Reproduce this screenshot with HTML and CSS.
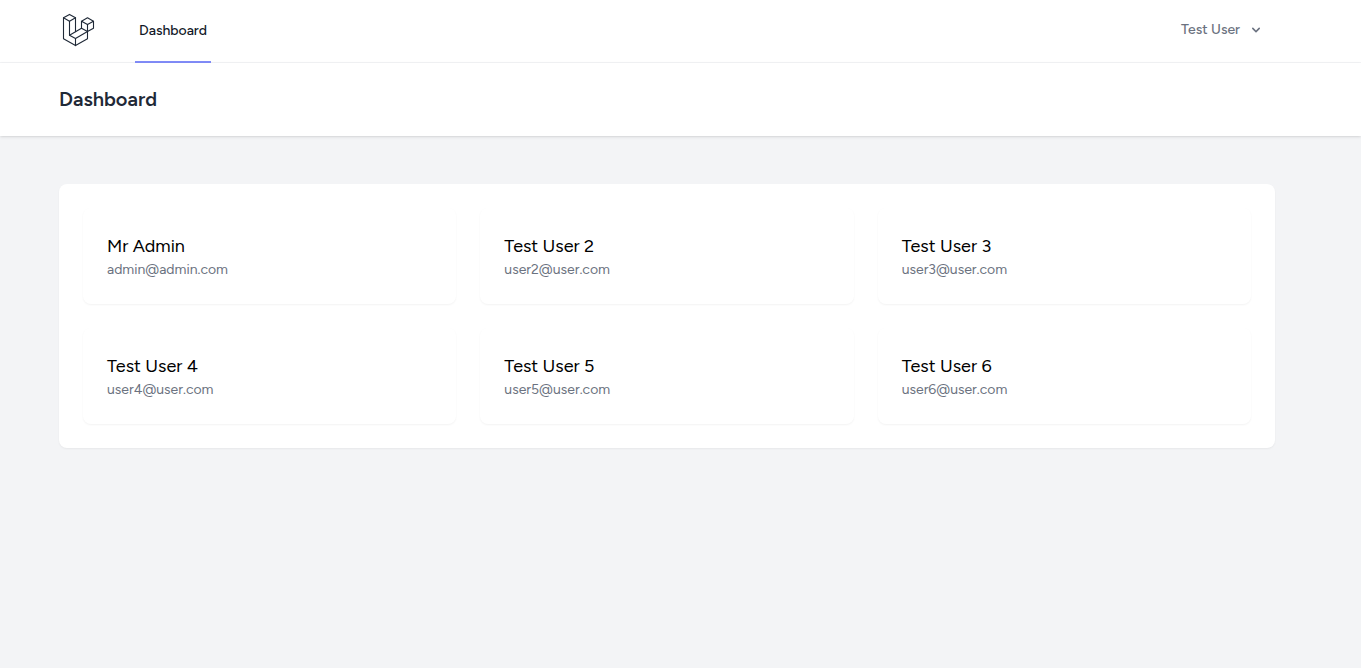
FILE: index.html
```html
<!DOCTYPE html>
<html lang="en">
<head>
<meta charset="utf-8">
<meta name="viewport" content="width=device-width, initial-scale=1">
<title>Dashboard</title>
<link rel="stylesheet" href="styles.css">
</head>
<body>
<nav class="nav">
  <div class="container nav-inner">
    <div class="nav-left">
      <a class="logo" href="#" aria-label="Home">
        <svg width="36" height="36" viewBox="0 0 36 36" fill="none" stroke="currentColor" stroke-width="1.1" stroke-linejoin="round" stroke-linecap="round" aria-hidden="true">
          <path d="M4.5 5.8 10.5 2.4 16.5 5.8 10.5 9.2Z"/>
          <path d="M4.5 5.8V26.8L16.5 33.6 28.5 26.8V19.6"/>
          <path d="M10.5 9.2V23.2L16.5 26.6V33.6"/>
          <path d="M16.5 5.8V19.6"/>
          <path d="M10.5 23.2 22.5 16.2 28.5 19.6 16.5 26.6"/>
          <path d="M22.5 9.2 28.5 5.8 34.5 9.2 28.5 12.6Z"/>
          <path d="M22.5 9.2V16.2M28.5 12.6V19.6L34.5 16.2V9.2"/>
        </svg>
      </a>
      <a class="nav-link" href="#" aria-current="page">Dashboard</a>
    </div>
    <button class="user-menu" type="button" aria-haspopup="true">
      <span>Test User</span>
      <svg width="16" height="16" viewBox="0 0 20 20" fill="currentColor" aria-hidden="true">
        <path fill-rule="evenodd" clip-rule="evenodd" d="M5.293 7.293a1 1 0 011.414 0L10 10.586l3.293-3.293a1 1 0 111.414 1.414l-4 4a1 1 0 01-1.414 0l-4-4a1 1 0 010-1.414z"/>
      </svg>
    </button>
  </div>
</nav>
<header class="page-header">
  <div class="container">
    <h1 class="page-title">Dashboard</h1>
  </div>
</header>
<main class="container main">
  <div class="panel">
    <article class="card"><h2 class="card-name">Mr Admin</h2><p class="card-email">admin@admin.com</p></article>
    <article class="card"><h2 class="card-name">Test User 2</h2><p class="card-email">user2@user.com</p></article>
    <article class="card"><h2 class="card-name">Test User 3</h2><p class="card-email">user3@user.com</p></article>
    <article class="card"><h2 class="card-name">Test User 4</h2><p class="card-email">user4@user.com</p></article>
    <article class="card"><h2 class="card-name">Test User 5</h2><p class="card-email">user5@user.com</p></article>
    <article class="card"><h2 class="card-name">Test User 6</h2><p class="card-email">user6@user.com</p></article>
  </div>
</main>
</body>
</html>
```
FILE: styles.css
```css
* { box-sizing: border-box; }
body {
  margin: 0;
  min-height: 100vh;
  background: #f3f4f6;
  color: #000;
  font-family: Figtree, Lato, sans-serif;
  font-size: 16px;
  line-height: 24px;
}
h1, h2, p { margin: 0; }
.container { padding-left: 59px; padding-right: 86px; }
.nav { background: #fff; border-bottom: 1px solid #f3f4f6; }
.nav-inner { display: flex; justify-content: space-between; height: 62px; padding-bottom: 2px; }
.nav-left { display: flex; gap: 40px; }
.logo { display: flex; align-items: center; color: #1f2937; }
.nav-link {
  display: flex;
  align-items: center;
  margin-bottom: -3px;
  padding: 0 4px;
  border-bottom: 2px solid #818cf8;
  color: #111827;
  font-size: 14px;
  font-weight: 500;
  line-height: 20px;
  text-decoration: none;
}
.user-menu {
  display: flex;
  align-items: center;
  gap: 8px;
  padding: 0 11px;
  border: 0;
  background: #fff;
  color: #6b7280;
  font: 500 14px/20px Figtree, Lato, sans-serif;
}
.page-header {
  position: relative;
  padding: 24px 0;
  background: #fff;
  box-shadow: 0 1px 3px rgb(0 0 0 / .1), 0 1px 2px -1px rgb(0 0 0 / .1);
}
.page-title { color: #1f2937; font-size: 20px; font-weight: 600; line-height: 25px; }
.main { padding-top: 48px; padding-bottom: 48px; }
.panel {
  display: grid;
  grid-template-columns: repeat(3, minmax(0, 1fr));
  gap: 24px;
  padding: 24px;
  border-radius: 8px;
  background: #fff;
  box-shadow: 0 1px 2px rgb(0 0 0 / .05);
}
.card { padding: 24px; border-radius: 8px; background: #fff; box-shadow: 0 1px 2px rgb(0 0 0 / .05); }
.card-name { font-size: 18px; font-weight: 400; line-height: 28px; }
.card-email { color: #6b7280; font-size: 14px; line-height: 20px; }
```
